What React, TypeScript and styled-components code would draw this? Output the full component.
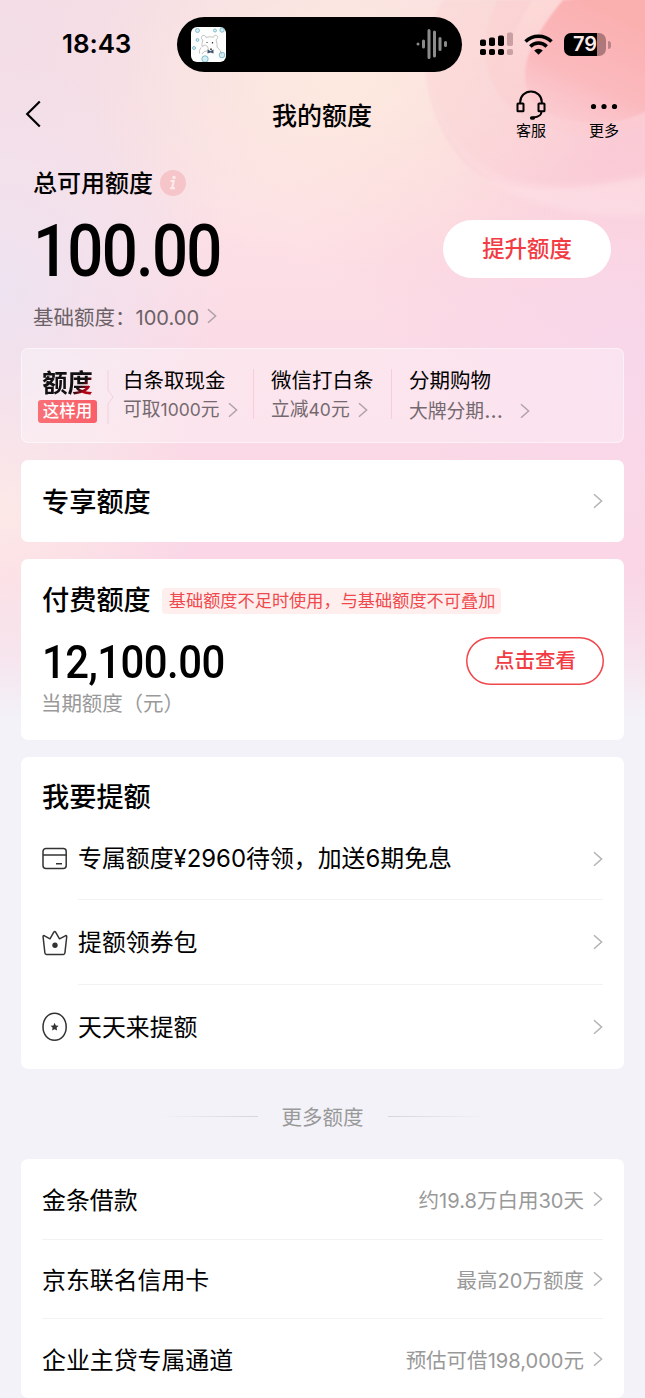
import React from 'react';
import styled, { createGlobalStyle } from 'styled-components';

const GlobalStyle = createGlobalStyle`
  * { box-sizing: border-box; }
  html, body { margin: 0; padding: 0; background: #f3f2f8; }
  body {
    font-family: Roboto, "Noto Sans CJK SC", sans-serif;
    color: #000;
    overflow: hidden;
  }
`;

const Page = styled.main`
  position: relative;
  width: 645px;
  height: 1398px;
  overflow: hidden;
  background: #f3f2f8;
`;

const Backdrop = styled.div`
  position: absolute;
  inset: 0 0 auto 0;
  height: 730px;
  background:
    linear-gradient(180deg, rgba(243, 242, 248, 0) 570px, rgba(243, 242, 248, 0.5) 655px, #f3f2f8 718px),
    radial-gradient(ellipse 270px 190px at 350px 80px, rgba(253, 235, 222, 0.9), rgba(253, 235, 222, 0) 100%),
    radial-gradient(ellipse 230px 230px at 0px 290px, rgba(237, 227, 241, 0.95), rgba(237, 227, 241, 0) 100%),
    radial-gradient(ellipse 200px 200px at 0px 500px, rgba(253, 233, 231, 1), rgba(253, 233, 231, 0) 100%),
    radial-gradient(ellipse 280px 190px at 645px 360px, rgba(248, 215, 236, 0.95), rgba(248, 215, 236, 0) 100%),
    radial-gradient(ellipse 360px 260px at 645px 150px, rgba(250, 200, 212, 0.8), rgba(250, 200, 212, 0) 100%),
    radial-gradient(ellipse 330px 300px at 0px 40px, rgba(243, 221, 230, 1), rgba(243, 221, 230, 0) 100%),
    linear-gradient(180deg, #f8dfe4 0, #fde1e6 200px, #fbdbe5 340px, #fad6e6 560px, #fad3e2 640px);
`;

const Swirl = styled.svg`
  position: absolute;
  top: 0;
  right: 0;
`;

const Content = styled.div`
  position: relative;
  display: flex;
  flex-direction: column;
`;

const Row = styled.div`
  display: flex;
  align-items: center;
`;

const Digits = styled.span<{ $em?: number }>`
  font-family: Inter, sans-serif;
  font-size: ${p => p.$em ?? 0.98}em;
`;

const StatusBar = styled.header`
  display: flex;
  align-items: center;
  height: 88px;
`;

const Clock = styled.div`
  width: 177px;
  padding-left: 62px;
  font: 600 26px/30px Inter, sans-serif;
  letter-spacing: -0.1px;
`;

const Island = styled.div`
  display: flex;
  align-items: center;
  justify-content: space-between;
  width: 285px;
  height: 55px;
  padding: 0 14px;
  border-radius: 28px;
  background: #000;
`;

const StatusIcons = styled.div`
  display: flex;
  align-items: center;
  gap: 11px;
  margin-left: 18px;
`;

const Battery = styled.div`
  position: relative;
  width: 42px;
  height: 23px;
  border-radius: 7px;
  background: linear-gradient(90deg, #000 33px, rgba(90, 55, 60, 0.48) 33px);
  color: #fde8ea;
  font: 600 20px/23px Inter, sans-serif;
  text-align: center;
  &::after {
    content: '';
    position: absolute;
    right: -5px;
    top: 8px;
    width: 3px;
    height: 8px;
    border-radius: 0 3px 3px 0;
    background: rgba(90, 55, 60, 0.4);
  }
`;

const NavBar = styled.nav`
  display: grid;
  grid-template-columns: 214px 1fr 215px;
  height: 64px;
`;

const BackButton = styled.div`
  padding: 12px 0 0 25px;
`;

const NavTitle = styled.h1`
  margin: 0;
  text-align: center;
  font-size: 25px;
  font-weight: 500;
  line-height: 57px;
`;

const NavActions = styled.div`
  display: flex;
  justify-content: flex-end;
  gap: 37px;
  padding: 2px 23px 0 0;
`;

const NavAction = styled.div`
  display: flex;
  flex-direction: column;
  align-items: center;
  width: 36px;
  font-size: 15px;
  line-height: 20px;
  svg { height: 30px; margin-bottom: 1px; }
`;

const Summary = styled.section`
  display: flex;
  justify-content: space-between;
  height: 196px;
  padding: 14px 34px 0 33px;
`;

const SummaryTitle = styled(Row)`
  height: 34px;
  font-size: 24px;
  font-weight: 500;
  gap: 7px;
  span { line-height: 30px; margin-top: 1px; }
`;

const Amount = styled.div<{ $size: number; $scale: number; $height: number; $tracking: number; $top?: number }>`
  height: ${p => p.$height}px;
  margin-top: ${p => p.$top ?? 0}px;
  font-family: Roboto, sans-serif;
  font-size: ${p => p.$size}px;
  line-height: ${p => p.$height}px;
  letter-spacing: ${p => p.$tracking}px;
  font-weight: 500;
  transform: scaleX(${p => p.$scale});
  transform-origin: left;
  white-space: nowrap;
`;

const BaseQuota = styled(Row)`
  height: 30px;
  margin-top: 15px;
  gap: 8px;
  font-size: 20.5px;
  color: #6b6166;
`;

const RaiseButton = styled.button`
  width: 168px;
  height: 58px;
  margin-top: 54px;
  padding: 0;
  border: 0;
  border-radius: 29px;
  background: #fff;
  color: #f23b43;
  font: 500 22.4px/56px Roboto, "Noto Sans CJK SC", sans-serif;
`;

const Stack = styled.div`
  display: flex;
  flex-direction: column;
  margin: 0 21px;
`;

const UsageBar = styled.section`
  display: flex;
  height: 95px;
  padding: 18px 0 0 16px;
  border: 1.5px solid rgba(255, 255, 255, 0.5);
  border-radius: 7px;
  background: rgba(255, 255, 255, 0.3);
`;

const UsageLabel = styled.div`
  display: flex;
  flex-direction: column;
  align-items: center;
  width: 59px;
`;

const UsageHeading = styled.strong`
  padding-top: 2px;
  font-size: 25.3px;
  font-weight: 700;
  line-height: 30px;
  background: linear-gradient(135deg, #111 68%, #b00014 80%);
  -webkit-background-clip: text;
  color: transparent;
`;

const UsageBadge = styled.span`
  width: 59px;
  height: 23px;
  margin-top: 1px;
  border-radius: 3px;
  background: linear-gradient(90deg, #f87076, #fa5f68);
  color: #fff;
  font-size: 16.5px;
  font-weight: 500;
  line-height: 24px;
  text-align: center;
`;

const UsageNotch = styled.svg`
  width: 9px;
  height: 54px;
  margin: 3px 7px 0 10px;
`;

const UsageItem = styled.div<{ $width: number; $divided?: boolean }>`
  width: ${p => p.$width}px;
  height: 50px;
  margin: 2px 17px 0 0;
  border-right: ${p => (p.$divided ? '1px solid rgba(245, 180, 200, 0.5)' : '0')};
  white-space: nowrap;
`;

const UsageName = styled.div`
  font-size: 20.5px;
  line-height: 24px;
`;

const UsageHint = styled.div<{ $gap?: number }>`
  display: flex;
  align-items: center;
  gap: ${p => p.$gap ?? 8}px;
  margin-top: 4px;
  font-size: 18.8px;
  line-height: 26px;
  color: #756970;
`;

const Card = styled.section<{ $height: number; $top: number }>`
  height: ${p => p.$height}px;
  margin-top: ${p => p.$top}px;
  padding: 0 21px;
  border-radius: 7px;
  background: #fff;
`;

const CardTitle = styled.h2`
  margin: 0;
  font-size: 27.2px;
  font-weight: 500;
  line-height: 36px;
  white-space: nowrap;
`;

const LinkRow = styled(Row)`
  justify-content: space-between;
  height: 82px;
  ${CardTitle} { padding-top: 3px; }
`;

const PaidHeader = styled(Row)`
  gap: 11px;
  padding-top: 24px;
`;

const Notice = styled.span`
  height: 26px;
  padding: 0 6px 0 7px;
  border-radius: 4px;
  background: #feefee;
  color: #f0484c;
  font-size: 17.2px;
  line-height: 26px;
  white-space: nowrap;
`;

const PaidBody = styled(Row)`
  justify-content: space-between;
  align-items: flex-start;
  padding-top: 18px;
`;

const PaidCaption = styled.div`
  margin: 2px 0 0 -1px;
  font-size: 20.5px;
  letter-spacing: -0.1px;
  line-height: 30px;
  color: #999;
`;

const ViewButton = styled.button`
  width: 138px;
  height: 48px;
  margin-right: -1px;
  padding: 0;
  border: 0;
  border-radius: 24px;
  box-shadow: inset 0 0 0 1.5px #f0474c;
  background: #fff;
  color: #f23b43;
  font: 500 20.5px/47px Roboto, "Noto Sans CJK SC", sans-serif;
`;

const TaskHeading = styled(CardTitle)`
  height: 61px;
  padding-top: 23px;
`;

const TaskRow = styled.div<{ $height: number }>`
  display: flex;
  align-items: center;
  height: ${p => p.$height}px;
`;

const TaskBody = styled.div<{ $last?: boolean }>`
  display: flex;
  flex: 1;
  align-items: center;
  justify-content: space-between;
  height: 100%;
  margin-left: 10px;
  border-bottom: ${p => (p.$last ? '0' : '1px solid #f2f2f4')};
`;

const TaskText = styled.span`
  height: 34px;
  margin-top: 3px;
  font-size: 23.9px;
  line-height: 32px;
`;

const MoreDivider = styled.div`
  display: flex;
  align-items: center;
  justify-content: center;
  gap: 24px;
  height: 90px;
  padding-top: 3px;
  font-size: 20.5px;
  color: #999;
`;

const FadeLine = styled.i<{ $flip?: boolean }>`
  width: 100px;
  height: 1px;
  margin-top: 2px;
  background: linear-gradient(${p => (p.$flip ? 270 : 90)}deg, rgba(210, 210, 216, 0), #d5d5da);
`;

const OfferRow = styled.div`
  display: flex;
  align-items: center;
  justify-content: space-between;
  height: 79.2px;
  border-bottom: 1px solid #f2f2f4;
  font-size: 23.9px;
  &:first-child { height: 80.6px; }
  &:last-child { border-bottom: 0; }
`;

const OfferHint = styled(Row)`
  gap: 9px;
  padding-top: 1px;
  font-size: 20.5px;
  color: #999;
`;

const Chevron = ({ color = '#b3b3b6' }: { color?: string }) => (
  <svg width="10" height="16" viewBox="0 0 10 16" fill="none" stroke={color} strokeWidth="1.5">
    <path d="M1 1.200 8.600 8 1 14.800" />
  </svg>
);

const withDigits = (text: string, em?: number) =>
  text.split(/([¥\d.,]+)/).map((part, i) => (i % 2 ? <Digits key={i} $em={em}>{part}</Digits> : part));

const BearAvatar = () => (
  <svg width="35" height="35" viewBox="0 0 35 35">
    <rect width="35" height="35" rx="6" fill="#fdfefe" />
    <g fill="#d5eef4" stroke="#7db7c8" strokeWidth="0.9">
      <circle cx="6.500" cy="3.500" r="2" />
      <circle cx="24" cy="3.500" r="1.500" />
      <circle cx="31" cy="3" r="2.200" />
      <circle cx="6.500" cy="13" r="1.400" />
      <circle cx="3" cy="21" r="1.500" />
      <circle cx="31" cy="28" r="2.800" />
      <circle cx="14" cy="32" r="3.200" />
    </g>
    <g fill="none" stroke="#b3a9a9" strokeWidth="0.7">
      <path d="M12 13c-2.500-1-2-5 1-4.500 1.500.2 2 1.500 2 2q4-1.300 7.500-.3c.5-3 5-2.500 4 1-.3 1-1 1.500-1.500 1.500q1.500 4 1 7.500M12 13q-1.500 3-1 6.500M26 20q4 3 4.500 7.500" />
      <path d="M11 19.500q3.500-3 5.500 0 1.500 3 .5 4M10 20.500q-2.500 3-1.500 6M11 27q2-3.500 5-3" />
    </g>
    <path d="M15.500 15.500h1M21.500 15v1.500" stroke="#333" strokeWidth="1.200" />
    <path d="m16.500 22.500 3 1.500 3-1.500v4l-3-1-3 1z" fill="#45566f" />
    <path d="M20 21.500v1.500" stroke="#222" strokeWidth="1.500" />
  </svg>
);

const Waveform = () => (
  <svg width="32" height="32" viewBox="0 0 32 32" stroke="#8b8b8b" strokeLinecap="round" strokeWidth="3">
    <path d="M2 16v.1M7.500 13v6M13 2.500v27M18.500 4v24M24 10.500v11M29.500 14.500v3" />
  </svg>
);

const Signal = () => (
  <svg width="33" height="24" viewBox="0 0 33 24">
    <rect x="0" y="7.500" width="6" height="6.500" rx="1.800" />
    <rect x="9" y="5.500" width="6" height="8.500" rx="1.800" />
    <rect x="18" y="3.500" width="6" height="10.500" rx="1.800" />
    <rect x="0" y="17" width="6" height="6" rx="1.800" />
    <rect x="9" y="17" width="6" height="6" rx="1.800" />
    <rect x="18" y="17" width="6" height="6" rx="1.800" />
    <g fill="#6d3f48" opacity="0.35">
      <rect x="27" y="0.500" width="6" height="13.500" rx="1.800" />
      <rect x="27" y="17" width="6" height="6" rx="1.800" />
    </g>
  </svg>
);

const Wifi = () => (
  <svg width="29" height="21" viewBox="0 0 29 21" fill="none" stroke="#000" strokeWidth="3.500">
    <path d="M1.500 7.500a18.500 18.500 0 0 1 26 0M6.300 12.400a11.600 11.600 0 0 1 16.400 0" />
    <path d="m14.500 20.700-4.300-4.300a6.100 6.100 0 0 1 8.600 0z" fill="#000" stroke="none" />
  </svg>
);

const Headset = () => (
  <svg width="30" height="30" viewBox="0 0 30 30" fill="none" stroke="#000" strokeWidth="2">
    <path d="M4.200 13v-.8a10.800 10.800 0 0 1 21.600 0V13" />
    <rect x="1.500" y="13.500" width="6" height="7.800" rx="0.600" />
    <rect x="22.500" y="13.500" width="6" height="7.800" rx="0.600" />
    <path d="M25.500 21.500c0 3.500-3 5.700-8.500 6" />
    <path d="M15.700 28h1.600" strokeWidth="3.600" strokeLinecap="round" />
  </svg>
);

const CardIcon = () => (
  <svg width="26" height="30" viewBox="0 0 26 30" fill="none" stroke="#333" strokeWidth="1.500">
    <rect x="1" y="4.500" width="23.200" height="20" rx="3" />
    <path d="M1 11h23.200M14 19.700h6" />
  </svg>
);

const CrownIcon = () => (
  <svg width="26" height="30" viewBox="0 0 26 30" fill="none" stroke="#333" strokeWidth="1.500" strokeLinejoin="round">
    <path d="M1.100 9q-.3-2 1.400-1.200L8 10.800 11.800 4.200q.9-1.200 1.800 0L17.500 10.800 23.300 7.800q1.700-.8 1.400 1.200L22.900 25q-.2 1.400-1.500 1.400h-17Q3.100 26.400 2.900 25z" />
    <circle cx="13" cy="17.200" r="2.700" fill="#333" stroke="none" />
  </svg>
);

const EggIcon = () => (
  <svg width="26" height="30" viewBox="0 0 26 30" fill="none" stroke="#333" strokeWidth="1.500">
    <path d="M12.600 1.300C19.300 1.300 24.200 7.500 24.200 15S19.300 28.200 12.600 28.200 1 22.500 1 15 5.800 1.300 12.600 1.300z" />
    <path d="m12.600 10.800 1.200 2.600 2.800.4-2 2 .5 2.800-2.500-1.400-2.500 1.400.5-2.800-2-2 2.800-.4z" fill="#333" stroke="none" />
  </svg>
);

const tasks = [
  { icon: <CardIcon />, text: '专属额度¥2960待领，加送6期免息', height: 82 },
  { icon: <CrownIcon />, text: '提额领券包', height: 85 },
  { icon: <EggIcon />, text: '天天来提额', height: 84 },
];

const offers = [
  { name: '金条借款', hint: '约19.8万白用30天' },
  { name: '京东联名信用卡', hint: '最高20万额度' },
  { name: '企业主贷专属通道', hint: '预估可借198,000元' },
];

export default function App() {
  return (
    <Page>
      <GlobalStyle />
      <Backdrop />
      <Swirl width="260" height="270" viewBox="0 0 260 270" fill="none">
        <defs>
          <filter id="soft" x="-20%" y="-20%" width="140%" height="140%">
            <feGaussianBlur stdDeviation="3" />
          </filter>
          <filter id="edge" x="-20%" y="-20%" width="140%" height="140%">
            <feGaussianBlur stdDeviation="1.200" />
          </filter>
          <linearGradient id="petal" x1="0" y1="0" x2="0.6" y2="1">
            <stop offset="0" stopColor="#fbd6d2" stopOpacity="0.5" />
            <stop offset="1" stopColor="#f9c3cf" stopOpacity="0.3" />
          </linearGradient>
          <linearGradient id="core" gradientUnits="userSpaceOnUse" x1="190" y1="130" x2="240" y2="20">
            <stop offset="0" stopColor="#fac2ca" stopOpacity="0.3" />
            <stop offset="0.4" stopColor="#fbbabe" />
            <stop offset="1" stopColor="#fbb0b0" />
          </linearGradient>
          <linearGradient id="rim" x1="0" y1="0" x2="0.5" y2="1">
            <stop offset="0" stopColor="#fddcd8" />
            <stop offset="1" stopColor="#fbcbd2" stopOpacity="0" />
          </linearGradient>
        </defs>
        <path d="M58 0C30 45 36 110 75 158s115 32 185 18V0z" fill="url(#petal)" filter="url(#edge)" />
        <path d="M112 0C90 55 100 100 150 122s75 12 110 4V0z" fill="#fbcaca" fillOpacity="0.3" filter="url(#edge)" />
        <path d="M148 0c-28 40-32 75-24 98 8 20 40 32 90 30l46-10V0z" fill="url(#rim)" filter="url(#edge)" />
        <path d="M178 0c-28 34-42 62-37 86 6 30 48 40 84 36 16-2 28-6 50-18V-10z" fill="url(#core)" filter="url(#edge)" />
        <path d="M40 60C42 100 60 140 95 172s110 50 175 42v-40c-65 16-135 18-170-5C70 150 45 105 40 60z" fill="#ffe7ec" fillOpacity="0.4" filter="url(#soft)" />
      </Swirl>
      <Content>
        <StatusBar>
          <Clock>18:43</Clock>
          <Island>
            <BearAvatar />
            <Waveform />
          </Island>
          <StatusIcons>
            <Signal />
            <Wifi />
            <Battery>79</Battery>
          </StatusIcons>
        </StatusBar>

        <NavBar>
          <BackButton>
            <svg width="16" height="28" viewBox="0 0 16 28" fill="none" stroke="#000" strokeWidth="2.200">
              <path d="M14.800 1.500 2.200 14l12.600 12.500" />
            </svg>
          </BackButton>
          <NavTitle>我的额度</NavTitle>
          <NavActions>
            <NavAction>
              <Headset />
              客服
            </NavAction>
            <NavAction>
              <svg width="28" height="30" viewBox="0 0 28 30">
                <circle cx="3.500" cy="16.500" r="2.600" />
                <circle cx="14" cy="16.500" r="2.600" />
                <circle cx="24.500" cy="16.500" r="2.600" />
              </svg>
              更多
            </NavAction>
          </NavActions>
        </NavBar>

        <Summary>
          <div>
            <SummaryTitle>
              <span>总可用额度</span>
              <svg width="26" height="26" viewBox="0 0 26 26">
                <circle cx="13" cy="13" r="13" fill="#f6c5ca" />
                <path d="M10.500 11h3.200l-1.500 7.300M10 18.300h5" fill="none" stroke="#fdecec" strokeWidth="2" />
                <circle cx="14" cy="7.500" r="1.700" fill="#fdecec" />
              </svg>
            </SummaryTitle>
            <Amount $size={73} $scale={0.87} $height={70} $tracking={-2} $top={16}>100.00</Amount>
            <BaseQuota>
              <span>{withDigits('基础额度：100.00')}</span>
              <Chevron color="#b09fa8" />
            </BaseQuota>
          </div>
          <RaiseButton>提升额度</RaiseButton>
        </Summary>

        <Stack>
          <UsageBar>
            <UsageLabel>
              <UsageHeading>额度</UsageHeading>
              <UsageBadge>这样用</UsageBadge>
            </UsageLabel>
            <UsageNotch viewBox="0 0 9 54" fill="none" stroke="#f5cfd8">
              <path d="M1 0v20l5 7-5 7v20" />
            </UsageNotch>
            <UsageItem $width={131} $divided>
              <UsageName>白条取现金</UsageName>
              <UsageHint>
                <span>{withDigits('可取1000元', 0.93)}</span>
                <Chevron color="#b0a2aa" />
              </UsageHint>
            </UsageItem>
            <UsageItem $width={121} $divided>
              <UsageName>微信打白条</UsageName>
              <UsageHint>
                <span>{withDigits('立减40元', 0.93)}</span>
                <Chevron color="#b0a2aa" />
              </UsageHint>
            </UsageItem>
            <UsageItem $width={130}>
              <UsageName>分期购物</UsageName>
              <UsageHint $gap={17}>
                <span>大牌分期<Digits $em={1.15}>…</Digits></span>
                <Chevron color="#b0a2aa" />
              </UsageHint>
            </UsageItem>
          </UsageBar>

          <Card $height={82} $top={17}>
            <LinkRow>
              <CardTitle>专享额度</CardTitle>
              <Chevron />
            </LinkRow>
          </Card>

          <Card $height={181} $top={17}>
            <PaidHeader>
              <CardTitle>付费额度</CardTitle>
              <Notice>基础额度不足时使用，与基础额度不可叠加</Notice>
            </PaidHeader>
            <PaidBody>
              <div>
                <Amount $size={46.5} $scale={0.9} $height={50} $tracking={-0.6}>12,100.00</Amount>
                <PaidCaption>当期额度（元）</PaidCaption>
              </div>
              <ViewButton>点击查看</ViewButton>
            </PaidBody>
          </Card>

          <Card $height={312} $top={17}>
            <TaskHeading>我要提额</TaskHeading>
            {tasks.map((t, i) => (
              <TaskRow key={t.text} $height={t.height}>
                {t.icon}
                <TaskBody $last={i === tasks.length - 1}>
                  <TaskText>{withDigits(t.text, 1)}</TaskText>
                  <Chevron />
                </TaskBody>
              </TaskRow>
            ))}
          </Card>

          <MoreDivider>
            <FadeLine />
            更多额度
            <FadeLine $flip />
          </MoreDivider>

          <Card $height={239} $top={0}>
            {offers.map(o => (
              <OfferRow key={o.name}>
                {o.name}
                <OfferHint>
                  <span>{withDigits(o.hint)}</span>
                  <Chevron />
                </OfferHint>
              </OfferRow>
            ))}
          </Card>
        </Stack>
      </Content>
    </Page>
  );
}
